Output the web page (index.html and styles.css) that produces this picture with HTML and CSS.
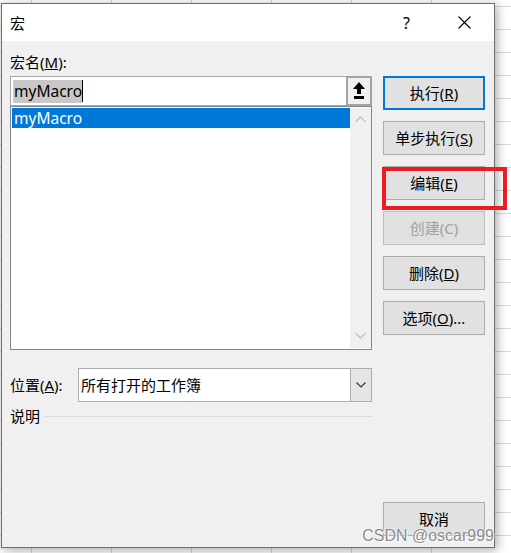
FILE: index.html
```html
<!DOCTYPE html>
<html lang="zh-CN">
<head>
<meta charset="utf-8">
<title>宏</title>
<link rel="stylesheet" href="styles.css">
</head>
<body>
<div class="sheet">
  <div class="dialog">
    <div class="titlebar">
      <span class="title">宏</span>
      <span class="help">?</span>
      <span class="close"><svg width="13" height="13" viewBox="0 0 13 13"><path d="M0.5 0.5 L12.5 12.5 M12.5 0.5 L0.5 12.5" stroke="#000" stroke-width="1.1" fill="none"/></svg></span>
    </div>
    <div class="body">
      <div class="left">
        <div class="lbl">宏名(<u>M</u>):</div>
        <div class="name-row">
          <div class="name-input"><span class="sel">myMacro</span><span class="caret"></span></div>
          <div class="upbtn"><svg width="12" height="18" viewBox="0 0 12 18"><path d="M6 0 L12 7 L8 7 L8 12 L4 12 L4 7 L0 7 Z" fill="#000"/><rect x="1" y="14" width="10" height="3" fill="#000"/></svg></div>
        </div>
        <div class="listbox">
          <div class="items"><div class="item selected">myMacro</div></div>
          <div class="vscroll">
            <svg width="11" height="7" viewBox="0 0 11 7"><path d="M0.5 6 L5.5 1 L10.5 6" stroke="#c2c2c2" stroke-width="1.3" fill="none"/></svg>
            <svg width="11" height="7" viewBox="0 0 11 7"><path d="M0.5 1 L5.5 6 L10.5 1" stroke="#c2c2c2" stroke-width="1.3" fill="none"/></svg>
          </div>
        </div>
        <div class="loc-row">
          <div class="lbl">位置(<u>A</u>):</div>
          <div class="combo">
            <span class="combo-text">所有打开的工作簿</span>
            <div class="drop"><svg width="10" height="6" viewBox="0 0 10 6"><path d="M0.5 0.5 L5 5 L9.5 0.5" stroke="#333" stroke-width="1.1" fill="none"/></svg></div>
          </div>
        </div>
        <div class="desc"><span class="lbl">说明</span><div class="rule"></div></div>
      </div>
      <div class="right">
        <div class="btn default">执行(<u>R</u>)</div>
        <div class="btn">单步执行(<u>S</u>)</div>
        <div class="btn-wrap">
          <div class="btn">编辑(<u>E</u>)</div>
          <div class="highlight"></div>
        </div>
        <div class="btn disabled">创建(C)</div>
        <div class="btn">删除(<u>D</u>)</div>
        <div class="btn">选项(<u>O</u>)...</div>
        <div class="btn cancel"><span class="cancel-text">取消</span></div>
      </div>
    </div>
  </div>
  <div class="watermark">CSDN @oscar999</div>
</div>
</body>
</html>
```

FILE: styles.css
```css
html, body {
  margin: 0;
  padding: 0;
}
body {
  width: 511px;
  height: 553px;
  overflow: hidden;
  background-color: #fff;
  background-image:
    repeating-linear-gradient(90deg, transparent 0 31px, #d9d9d9 31px 32px, transparent 32px 80px),
    repeating-linear-gradient(180deg, transparent 0 6px, #d9d9d9 6px 7px, transparent 7px 23px);
  font-family: "Noto Sans", "Noto Sans CJK SC", sans-serif;
  font-size: 15px;
  color: #000;
}
.sheet {
  position: relative;
  width: 511px;
  height: 553px;
  padding-top: 3px;
  padding-left: 1px;
  box-sizing: border-box;
}
.dialog {
  width: 494px;
  height: 545px;
  box-sizing: border-box;
  border: 1px solid #6e6e6e;
  background: #f0f0f0;
  box-shadow: 2px 2px 10px rgba(0, 0, 0, 0.35);
  display: flex;
  flex-direction: column;
}
.titlebar {
  height: 37px;
  background: #fff;
  display: flex;
  align-items: center;
  padding-left: 8px;
  flex-shrink: 0;
}
.title {
  font-size: 15px;
  line-height: 20px;
  flex: 1;
}
.help {
  font-size: 16px;
  line-height: 20px;
  margin-right: 48px;
}
.close {
  display: flex;
  margin-right: 23px;
}
.body {
  flex: 1;
  display: flex;
  gap: 11px;
  padding: 11px 0 11px 8px;
}
.left {
  width: 362px;
  display: flex;
  flex-direction: column;
}
.lbl {
  line-height: 20px;
  font-size: 15px;
}
.name-row {
  margin-top: 4px;
  height: 30px;
  display: flex;
}
.name-input {
  flex: 1;
  border: 1px solid #a6a6a6;
  border-right: none;
  background: #fff;
  display: flex;
  align-items: center;
  padding-left: 2px;
}
.sel {
  background: #c8c8c8;
  font-size: 15.5px;
  line-height: 23px;
  padding-left: 1px;
}
.caret {
  width: 1px;
  height: 22px;
  background: #000;
}
.upbtn {
  width: 26px;
  box-sizing: border-box;
  border: 2px solid #a3a3a3;
  background: #f0f0f0;
  display: flex;
  align-items: center;
  justify-content: center;
}
.listbox {
  height: 244px;
  box-sizing: border-box;
  border: 1px solid #828790;
  background: #fff;
  display: flex;
  padding: 1px 0 1px 1px;
}
.items {
  flex: 1;
}
.item {
  height: 20px;
  line-height: 20px;
  font-size: 15.5px;
  padding-left: 2px;
}
.item.selected {
  background: #0078d7;
  color: #fff;
}
.vscroll {
  width: 21px;
  background: #f0f0f0;
  display: flex;
  flex-direction: column;
  justify-content: space-between;
  align-items: center;
  padding: 8px 0 9px;
}
.loc-row {
  margin-top: 18px;
  display: flex;
  align-items: center;
  justify-content: space-between;
}
.combo {
  width: 294px;
  height: 34px;
  box-sizing: border-box;
  border: 1px solid #adadad;
  background: #fff;
  display: flex;
  align-items: center;
}
.combo-text {
  flex: 1;
  padding-left: 2px;
  line-height: 20px;
}
.drop {
  width: 20px;
  height: 100%;
  background: #e5e5e5;
  border-left: 1px solid #adadad;
  display: flex;
  align-items: center;
  justify-content: center;
}
.desc {
  margin-top: 4px;
  display: flex;
  align-items: center;
  gap: 5px;
}
.rule {
  flex: 1;
  height: 1px;
  background: #dcdcdc;
}
.right {
  width: 102px;
  padding-top: 24px;
  display: flex;
  flex-direction: column;
  gap: 11px;
}
.btn {
  height: 34px;
  box-sizing: border-box;
  border: 1px solid #adadad;
  background: #e1e1e1;
  display: flex;
  align-items: center;
  justify-content: center;
  font-size: 15px;
  line-height: 20px;
}
.btn.default {
  border: 2px solid #0078d7;
}
.btn.disabled {
  color: #a0a0a0;
  border-color: #bfbfbf;
  background: #e0e0e0;
}
.btn.cancel {
  margin-top: auto;
}
.cancel-text {
  line-height: 18px;
}
.btn-wrap {
  position: relative;
}
.highlight {
  position: absolute;
  left: -1px;
  top: 1px;
  width: 125px;
  height: 43px;
  box-sizing: border-box;
  border: 4px solid #ed1c24;
}
.watermark {
  position: absolute;
  right: 17px;
  bottom: 10px;
  font-family: "Liberation Sans", "Noto Sans", sans-serif;
  font-size: 16px;
  line-height: 14px;
  color: #8c8c8c;
  text-shadow: 0 0 2px #fff, 1px 1px 0 #fff;
}
```
